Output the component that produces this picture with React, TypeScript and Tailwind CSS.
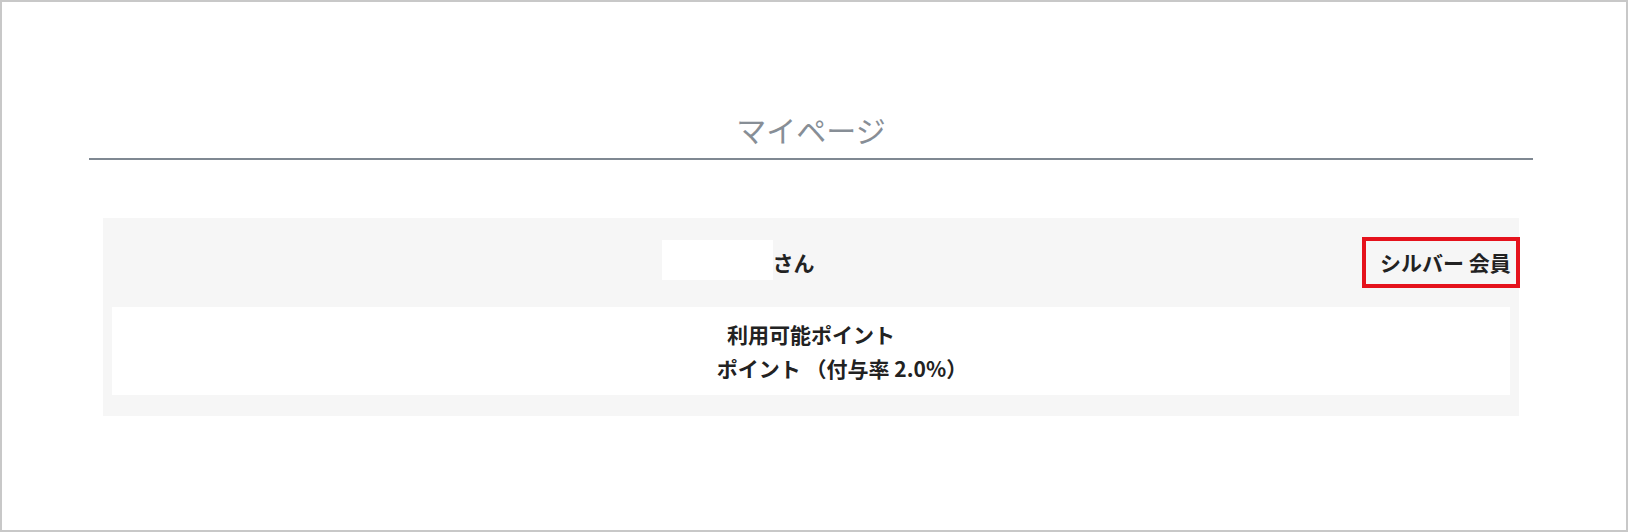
export default function App() {
  return (
    <div
      className="w-[1628px] h-[532px] border-2 border-[#c8c8c8] bg-white text-[#222222]"
      style={{ fontFamily: '"Noto Sans CJK JP", "Noto Sans", sans-serif' }}
    >
      <div className="ml-[87px] w-[1444px] pt-[106px]">
        <h1 className="text-center text-[30px] leading-[42px] font-normal text-[#878e96] pb-[8px]">
          マイページ
        </h1>
        <div className="h-[2px] bg-[#7f8892]" />

        <section className="mx-[14px] mt-[58px] bg-[#f6f6f6] pt-[19px] pb-[21px]">
          <div className="flex items-center pl-[9px] -mr-[1px]">
            <div className="flex flex-1 items-center justify-center pl-[2px]">
              <span className="inline-block w-[111px] h-[40px] mb-[6px] bg-white" />
              <span className="text-[21px] font-bold leading-none">さん</span>
            </div>
            <div className="flex h-[51px] w-[158px] items-center border-4 border-[#e5121c] pl-[14px] text-[21px] font-bold whitespace-nowrap">
              シルバー 会員
            </div>
          </div>

          <div className="mx-[9px] mt-[19px] bg-white py-[10px] text-center text-[21px] font-bold leading-[34px]">
            <p>利用可能ポイント</p>
            <p>
              <span className="inline-block w-[62px]" />
              ポイント （付与率 2.0%）
            </p>
          </div>
        </section>
      </div>
    </div>
  );
}
